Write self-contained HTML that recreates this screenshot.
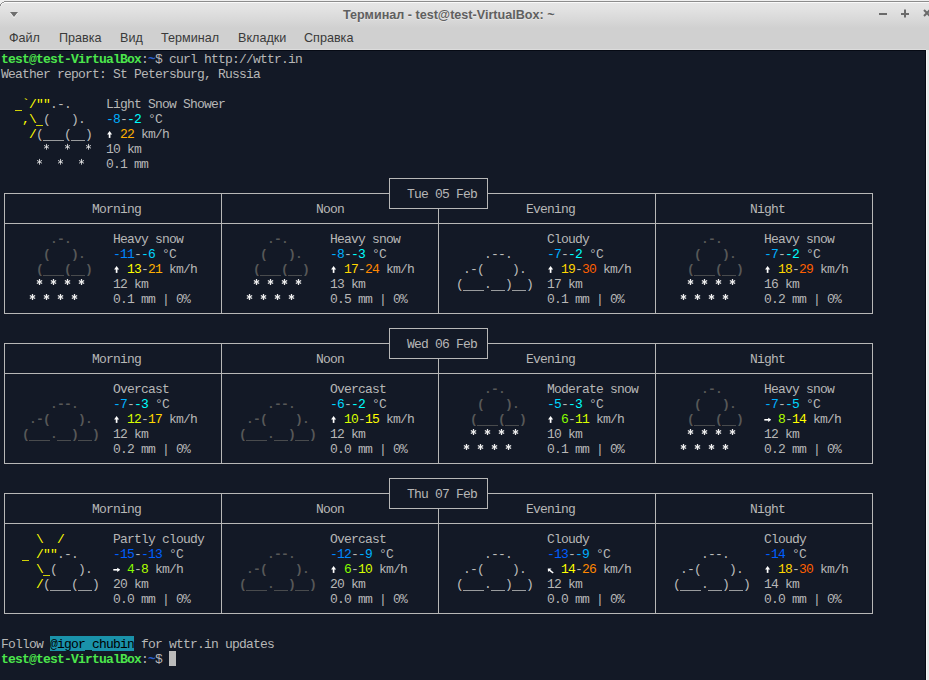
<!DOCTYPE html>
<html><head><meta charset="utf-8"><style>
html,body{margin:0;padding:0}
body{width:929px;height:680px;overflow:hidden;position:relative;background:#efefef;font-family:"Liberation Sans",sans-serif}
#win{position:absolute;left:0;top:0;width:929px;height:680px;overflow:hidden}
#title{position:absolute;left:0;top:1px;width:929px;height:27px;background:linear-gradient(#e6e6e6 0px,#e3e3e3 6px,#d8d8d8 18px,#d0d0d0 26px);border-top:1px solid #8c8c8c;box-shadow:inset 0 1px 0 #fafafa}
#ttl{position:absolute;left:343px;top:8px;width:211px;font-weight:bold;font-size:12.6px;color:#606060;white-space:nowrap;text-shadow:0 1px 0 rgba(255,255,255,.35)}
#menu{position:absolute;left:0;top:28px;width:929px;height:22px;background:#d0d0d0}
#mb{position:absolute;left:0;top:49px;width:926px;height:1px;background:#dcdcdc}
.m{position:absolute;top:3px;font-size:12.6px;color:#3a3a3a;white-space:nowrap}
#term{position:absolute;left:0;top:50px;width:926px;height:630px;background:#131926;border-top:1px solid #060a14;box-sizing:border-box;border-right:1px solid #060a14}
#rs{position:absolute;left:926px;top:50px;width:3px;height:630px;background:#e8e8e8;border-left:1px solid #f6f6f6;box-sizing:border-box}
.t{position:absolute;height:15px;line-height:15px;white-space:pre;font-family:"Liberation Mono",monospace;font-size:13px}
.t svg.g{position:absolute;top:-1px}
.t i{position:absolute;top:0;font-style:normal;width:7px;text-align:center}
b{position:absolute;background:#b7b7b7;display:block}
#cur{position:absolute;left:169px;top:651px;width:7px;height:15px;background:#bbbbbb}
</style></head><body><div id="win">
<div id="title"></div>
<svg style="position:absolute;left:0;top:0" width="6" height="7" shape-rendering="crispEdges">
<rect x="0" y="1" width="4" height="1" fill="#efefef"/><rect x="0" y="2" width="2" height="1" fill="#efefef"/><rect x="0" y="3" width="1" height="1" fill="#efefef"/>
<rect x="2" y="2" width="2" height="1" fill="#9a9a9a"/><rect x="1" y="3" width="1" height="1" fill="#8e8e8e"/><rect x="0" y="4" width="1" height="2" fill="#8e8e8e"/>
<rect x="2" y="3" width="2" height="1" fill="#f4f4f4"/><rect x="1" y="4" width="1" height="2" fill="#f0f0f0"/>
</svg>
<svg style="position:absolute;left:9px;top:11px" width="11" height="9"><path d="M1 2 L9 2 L5 7 Z" fill="#ffffff" opacity="0.9"/><path d="M1 1 L9 1 L5 6 Z" fill="#6e6e6e"/></svg>
<div id="ttl">Терминал - test@test-VirtualBox: ~</div>
<svg style="position:absolute;left:876px;top:7px" width="53" height="14">
<rect x="3" y="6" width="8" height="2" fill="#6a6a6a"/>
<rect x="25" y="6" width="8" height="2" fill="#6a6a6a"/><rect x="28" y="2.5" width="2" height="8" fill="#6a6a6a"/>
<path d="M48 3 L54 9 M54 3 L48 9" stroke="#6a6a6a" stroke-width="2"/>
</svg>
<div id="menu"><span class="m" style="left:9px">Файл</span><span class="m" style="left:59px">Правка</span><span class="m" style="left:120px">Вид</span><span class="m" style="left:161px">Терминал</span><span class="m" style="left:238px">Вкладки</span><span class="m" style="left:304px">Справка</span></div><div id="mb"></div>
<div id="term"></div>
<div id="rs"></div>
<b style="left:389px;top:178px;width:99px;height:1px"></b>
<b style="left:389px;top:208px;width:99px;height:1px"></b>
<b style="left:4px;top:193px;width:386px;height:1px"></b>
<b style="left:487px;top:193px;width:386px;height:1px"></b>
<b style="left:4px;top:223px;width:869px;height:1px"></b>
<b style="left:4px;top:313px;width:869px;height:1px"></b>
<b style="left:389px;top:328px;width:99px;height:1px"></b>
<b style="left:389px;top:358px;width:99px;height:1px"></b>
<b style="left:4px;top:343px;width:386px;height:1px"></b>
<b style="left:487px;top:343px;width:386px;height:1px"></b>
<b style="left:4px;top:373px;width:869px;height:1px"></b>
<b style="left:4px;top:463px;width:869px;height:1px"></b>
<b style="left:389px;top:478px;width:99px;height:1px"></b>
<b style="left:389px;top:508px;width:99px;height:1px"></b>
<b style="left:4px;top:493px;width:386px;height:1px"></b>
<b style="left:487px;top:493px;width:386px;height:1px"></b>
<b style="left:4px;top:523px;width:869px;height:1px"></b>
<b style="left:4px;top:613px;width:869px;height:1px"></b>
<b style="left:389px;top:178px;width:1px;height:31px"></b>
<b style="left:487px;top:178px;width:1px;height:31px"></b>
<b style="left:438px;top:208px;width:1px;height:106px"></b>
<b style="left:4px;top:193px;width:1px;height:121px"></b>
<b style="left:221px;top:193px;width:1px;height:121px"></b>
<b style="left:655px;top:193px;width:1px;height:121px"></b>
<b style="left:872px;top:193px;width:1px;height:121px"></b>
<b style="left:389px;top:328px;width:1px;height:31px"></b>
<b style="left:487px;top:328px;width:1px;height:31px"></b>
<b style="left:438px;top:358px;width:1px;height:106px"></b>
<b style="left:4px;top:343px;width:1px;height:121px"></b>
<b style="left:221px;top:343px;width:1px;height:121px"></b>
<b style="left:655px;top:343px;width:1px;height:121px"></b>
<b style="left:872px;top:343px;width:1px;height:121px"></b>
<b style="left:389px;top:478px;width:1px;height:31px"></b>
<b style="left:487px;top:478px;width:1px;height:31px"></b>
<b style="left:438px;top:508px;width:1px;height:106px"></b>
<b style="left:4px;top:493px;width:1px;height:121px"></b>
<b style="left:221px;top:493px;width:1px;height:121px"></b>
<b style="left:655px;top:493px;width:1px;height:121px"></b>
<b style="left:872px;top:493px;width:1px;height:121px"></b>
<div class="t" style="left:1px;top:52px;color:#4ce64c;font-weight:bold"><i style="left:0px">t</i><i style="left:7px">e</i><i style="left:14px">s</i><i style="left:21px">t</i><i style="left:28px">@</i><i style="left:35px">t</i><i style="left:42px">e</i><i style="left:49px">s</i><i style="left:56px">t</i><i style="left:63px">-</i><i style="left:70px">V</i><i style="left:77px">i</i><i style="left:84px">r</i><i style="left:91px">t</i><i style="left:98px">u</i><i style="left:105px">a</i><i style="left:112px">l</i><i style="left:119px">B</i><i style="left:126px">o</i><i style="left:133px">x</i></div>
<div class="t" style="left:141px;top:52px;color:#b7b7b7"><i style="left:0px">:</i></div>
<div class="t" style="left:148px;top:52px;color:#295fcc;font-weight:bold"><i style="left:0px">~</i></div>
<div class="t" style="left:155px;top:52px;color:#b7b7b7"><i style="left:0px">$</i></div>
<div class="t" style="left:169px;top:52px;color:#b7b7b7"><i style="left:0px">c</i><i style="left:7px">u</i><i style="left:14px">r</i><i style="left:21px">l</i><i style="left:35px">h</i><i style="left:42px">t</i><i style="left:49px">t</i><i style="left:56px">p</i><i style="left:63px">:</i><i style="left:70px">/</i><i style="left:77px">/</i><i style="left:84px">w</i><i style="left:91px">t</i><i style="left:98px">t</i><i style="left:105px">r</i><i style="left:112px">.</i><i style="left:119px">i</i><i style="left:126px">n</i></div>
<div class="t" style="left:1px;top:67px;color:#b7b7b7"><i style="left:0px">W</i><i style="left:7px">e</i><i style="left:14px">a</i><i style="left:21px">t</i><i style="left:28px">h</i><i style="left:35px">e</i><i style="left:42px">r</i><i style="left:56px">r</i><i style="left:63px">e</i><i style="left:70px">p</i><i style="left:77px">o</i><i style="left:84px">r</i><i style="left:91px">t</i><i style="left:98px">:</i><i style="left:112px">S</i><i style="left:119px">t</i><i style="left:133px">P</i><i style="left:140px">e</i><i style="left:147px">t</i><i style="left:154px">e</i><i style="left:161px">r</i><i style="left:168px">s</i><i style="left:175px">b</i><i style="left:182px">u</i><i style="left:189px">r</i><i style="left:196px">g</i><i style="left:203px">,</i><i style="left:217px">R</i><i style="left:224px">u</i><i style="left:231px">s</i><i style="left:238px">s</i><i style="left:245px">i</i><i style="left:252px">a</i></div>
<div class="t" style="left:15px;top:97px;color:#ffff00"><svg class="g" style="left:0px" width="7" height="15"><rect x="0" y="14" width="7" height="1" fill="#ffff00" fill-opacity="0.8"/></svg><i style="left:7px">`</i><i style="left:14px">/</i><i style="left:21px">&quot;</i><i style="left:28px">&quot;</i></div>
<div class="t" style="left:50px;top:97px;color:#bcbcbc"><i style="left:0px">.</i><i style="left:7px">-</i><i style="left:14px">.</i></div>
<div class="t" style="left:22px;top:112px;color:#ffff00"><i style="left:0px">,</i><i style="left:7px">\</i><svg class="g" style="left:14px" width="7" height="15"><rect x="0" y="14" width="7" height="1" fill="#ffff00" fill-opacity="0.8"/></svg></div>
<div class="t" style="left:43px;top:112px;color:#bcbcbc"><i style="left:0px">(</i><i style="left:28px">)</i><i style="left:35px">.</i></div>
<div class="t" style="left:29px;top:127px;color:#ffff00"><i style="left:0px">/</i></div>
<div class="t" style="left:36px;top:127px;color:#bcbcbc"><i style="left:0px">(</i><svg class="g" style="left:7px" width="7" height="15"><rect x="0" y="14" width="7" height="1" fill="#bcbcbc" fill-opacity="0.8"/></svg><svg class="g" style="left:14px" width="7" height="15"><rect x="0" y="14" width="7" height="1" fill="#bcbcbc" fill-opacity="0.8"/></svg><svg class="g" style="left:21px" width="7" height="15"><rect x="0" y="14" width="7" height="1" fill="#bcbcbc" fill-opacity="0.8"/></svg><i style="left:28px">(</i><svg class="g" style="left:35px" width="7" height="15"><rect x="0" y="14" width="7" height="1" fill="#bcbcbc" fill-opacity="0.8"/></svg><svg class="g" style="left:42px" width="7" height="15"><rect x="0" y="14" width="7" height="1" fill="#bcbcbc" fill-opacity="0.8"/></svg><i style="left:49px">)</i></div>
<div class="t" style="left:43px;top:142px;color:#eeeeee"><svg class="g" style="left:0px" width="7" height="15"><path d="M3.50 2.90L3.50 8.70M0.99 4.35L6.01 7.25M6.01 4.35L0.99 7.25" stroke="#eeeeee" stroke-width="0.8" fill="none"/></svg><svg class="g" style="left:21px" width="7" height="15"><path d="M3.50 2.90L3.50 8.70M0.99 4.35L6.01 7.25M6.01 4.35L0.99 7.25" stroke="#eeeeee" stroke-width="0.8" fill="none"/></svg><svg class="g" style="left:42px" width="7" height="15"><path d="M3.50 2.90L3.50 8.70M0.99 4.35L6.01 7.25M6.01 4.35L0.99 7.25" stroke="#eeeeee" stroke-width="0.8" fill="none"/></svg></div>
<div class="t" style="left:36px;top:157px;color:#eeeeee"><svg class="g" style="left:0px" width="7" height="15"><path d="M3.50 2.90L3.50 8.70M0.99 4.35L6.01 7.25M6.01 4.35L0.99 7.25" stroke="#eeeeee" stroke-width="0.8" fill="none"/></svg><svg class="g" style="left:21px" width="7" height="15"><path d="M3.50 2.90L3.50 8.70M0.99 4.35L6.01 7.25M6.01 4.35L0.99 7.25" stroke="#eeeeee" stroke-width="0.8" fill="none"/></svg><svg class="g" style="left:42px" width="7" height="15"><path d="M3.50 2.90L3.50 8.70M0.99 4.35L6.01 7.25M6.01 4.35L0.99 7.25" stroke="#eeeeee" stroke-width="0.8" fill="none"/></svg></div>
<div class="t" style="left:106px;top:97px;color:#b7b7b7"><i style="left:0px">L</i><i style="left:7px">i</i><i style="left:14px">g</i><i style="left:21px">h</i><i style="left:28px">t</i><i style="left:42px">S</i><i style="left:49px">n</i><i style="left:56px">o</i><i style="left:63px">w</i><i style="left:77px">S</i><i style="left:84px">h</i><i style="left:91px">o</i><i style="left:98px">w</i><i style="left:105px">e</i><i style="left:112px">r</i></div>
<div class="t" style="left:106px;top:112px;color:#00afff"><i style="left:0px">-</i><i style="left:7px">8</i></div>
<div class="t" style="left:120px;top:112px;color:#b7b7b7"><i style="left:0px">-</i></div>
<div class="t" style="left:127px;top:112px;color:#00ffff"><i style="left:0px">-</i><i style="left:7px">2</i></div>
<div class="t" style="left:148px;top:112px;color:#b7b7b7"><i style="left:0px">°</i><i style="left:7px">C</i></div>
<div class="t" style="left:106px;top:127px;color:#ffffff;font-weight:bold"><svg class="g" style="left:0px" width="7" height="15"><path d="M3.6 7.6V11.9" stroke="#ffffff" stroke-width="1.7"/><path d="M1.1 8.4L3.6 4.9L6.1 8.4Z" fill="#ffffff"/></svg></div>
<div class="t" style="left:120px;top:127px;color:#ffaf00"><i style="left:0px">2</i><i style="left:7px">2</i></div>
<div class="t" style="left:141px;top:127px;color:#b7b7b7"><i style="left:0px">k</i><i style="left:7px">m</i><i style="left:14px">/</i><i style="left:21px">h</i></div>
<div class="t" style="left:106px;top:142px;color:#b7b7b7"><i style="left:0px">1</i><i style="left:7px">0</i><i style="left:21px">k</i><i style="left:28px">m</i></div>
<div class="t" style="left:106px;top:157px;color:#b7b7b7"><i style="left:0px">0</i><i style="left:7px">.</i><i style="left:14px">1</i><i style="left:28px">m</i><i style="left:35px">m</i></div>
<div class="t" style="left:407px;top:187px;color:#b7b7b7"><i style="left:0px">T</i><i style="left:7px">u</i><i style="left:14px">e</i><i style="left:28px">0</i><i style="left:35px">5</i><i style="left:49px">F</i><i style="left:56px">e</i><i style="left:63px">b</i></div>
<div class="t" style="left:92px;top:202px;color:#b7b7b7"><i style="left:0px">M</i><i style="left:7px">o</i><i style="left:14px">r</i><i style="left:21px">n</i><i style="left:28px">i</i><i style="left:35px">n</i><i style="left:42px">g</i></div>
<div class="t" style="left:316px;top:202px;color:#b7b7b7"><i style="left:0px">N</i><i style="left:7px">o</i><i style="left:14px">o</i><i style="left:21px">n</i></div>
<div class="t" style="left:526px;top:202px;color:#b7b7b7"><i style="left:0px">E</i><i style="left:7px">v</i><i style="left:14px">e</i><i style="left:21px">n</i><i style="left:28px">i</i><i style="left:35px">n</i><i style="left:42px">g</i></div>
<div class="t" style="left:750px;top:202px;color:#b7b7b7"><i style="left:0px">N</i><i style="left:7px">i</i><i style="left:14px">g</i><i style="left:21px">h</i><i style="left:28px">t</i></div>
<div class="t" style="left:50px;top:232px;color:#585858;font-weight:bold"><i style="left:0px">.</i><i style="left:7px">-</i><i style="left:14px">.</i></div>
<div class="t" style="left:43px;top:247px;color:#585858;font-weight:bold"><i style="left:0px">(</i><i style="left:28px">)</i><i style="left:35px">.</i></div>
<div class="t" style="left:36px;top:262px;color:#585858;font-weight:bold"><i style="left:0px">(</i><svg class="g" style="left:7px" width="7" height="15"><rect x="0" y="14" width="7" height="1" fill="#585858" fill-opacity="0.8"/></svg><svg class="g" style="left:14px" width="7" height="15"><rect x="0" y="14" width="7" height="1" fill="#585858" fill-opacity="0.8"/></svg><svg class="g" style="left:21px" width="7" height="15"><rect x="0" y="14" width="7" height="1" fill="#585858" fill-opacity="0.8"/></svg><i style="left:28px">(</i><svg class="g" style="left:35px" width="7" height="15"><rect x="0" y="14" width="7" height="1" fill="#585858" fill-opacity="0.8"/></svg><svg class="g" style="left:42px" width="7" height="15"><rect x="0" y="14" width="7" height="1" fill="#585858" fill-opacity="0.8"/></svg><i style="left:49px">)</i></div>
<div class="t" style="left:36px;top:277px;color:#eeeeee;font-weight:bold"><svg class="g" style="left:0px" width="7" height="15"><path d="M3.50 2.95L3.50 9.05M0.86 4.48L6.14 7.52M6.14 4.48L0.86 7.52" stroke="#eeeeee" stroke-width="1.25" fill="none"/></svg><svg class="g" style="left:14px" width="7" height="15"><path d="M3.50 2.95L3.50 9.05M0.86 4.48L6.14 7.52M6.14 4.48L0.86 7.52" stroke="#eeeeee" stroke-width="1.25" fill="none"/></svg><svg class="g" style="left:28px" width="7" height="15"><path d="M3.50 2.95L3.50 9.05M0.86 4.48L6.14 7.52M6.14 4.48L0.86 7.52" stroke="#eeeeee" stroke-width="1.25" fill="none"/></svg><svg class="g" style="left:42px" width="7" height="15"><path d="M3.50 2.95L3.50 9.05M0.86 4.48L6.14 7.52M6.14 4.48L0.86 7.52" stroke="#eeeeee" stroke-width="1.25" fill="none"/></svg></div>
<div class="t" style="left:29px;top:292px;color:#eeeeee;font-weight:bold"><svg class="g" style="left:0px" width="7" height="15"><path d="M3.50 2.95L3.50 9.05M0.86 4.48L6.14 7.52M6.14 4.48L0.86 7.52" stroke="#eeeeee" stroke-width="1.25" fill="none"/></svg><svg class="g" style="left:14px" width="7" height="15"><path d="M3.50 2.95L3.50 9.05M0.86 4.48L6.14 7.52M6.14 4.48L0.86 7.52" stroke="#eeeeee" stroke-width="1.25" fill="none"/></svg><svg class="g" style="left:28px" width="7" height="15"><path d="M3.50 2.95L3.50 9.05M0.86 4.48L6.14 7.52M6.14 4.48L0.86 7.52" stroke="#eeeeee" stroke-width="1.25" fill="none"/></svg><svg class="g" style="left:42px" width="7" height="15"><path d="M3.50 2.95L3.50 9.05M0.86 4.48L6.14 7.52M6.14 4.48L0.86 7.52" stroke="#eeeeee" stroke-width="1.25" fill="none"/></svg></div>
<div class="t" style="left:113px;top:232px;color:#b7b7b7"><i style="left:0px">H</i><i style="left:7px">e</i><i style="left:14px">a</i><i style="left:21px">v</i><i style="left:28px">y</i><i style="left:42px">s</i><i style="left:49px">n</i><i style="left:56px">o</i><i style="left:63px">w</i></div>
<div class="t" style="left:113px;top:247px;color:#0087ff"><i style="left:0px">-</i><i style="left:7px">1</i><i style="left:14px">1</i></div>
<div class="t" style="left:134px;top:247px;color:#b7b7b7"><i style="left:0px">-</i></div>
<div class="t" style="left:141px;top:247px;color:#00d7ff"><i style="left:0px">-</i><i style="left:7px">6</i></div>
<div class="t" style="left:162px;top:247px;color:#b7b7b7"><i style="left:0px">°</i><i style="left:7px">C</i></div>
<div class="t" style="left:113px;top:262px;color:#ffffff;font-weight:bold"><svg class="g" style="left:0px" width="7" height="15"><path d="M3.6 7.6V11.9" stroke="#ffffff" stroke-width="1.7"/><path d="M1.1 8.4L3.6 4.9L6.1 8.4Z" fill="#ffffff"/></svg></div>
<div class="t" style="left:127px;top:262px;color:#ffff00"><i style="left:0px">1</i><i style="left:7px">3</i></div>
<div class="t" style="left:141px;top:262px;color:#b7b7b7"><i style="left:0px">-</i></div>
<div class="t" style="left:148px;top:262px;color:#ffaf00"><i style="left:0px">2</i><i style="left:7px">1</i></div>
<div class="t" style="left:169px;top:262px;color:#b7b7b7"><i style="left:0px">k</i><i style="left:7px">m</i><i style="left:14px">/</i><i style="left:21px">h</i></div>
<div class="t" style="left:113px;top:277px;color:#b7b7b7"><i style="left:0px">1</i><i style="left:7px">2</i><i style="left:21px">k</i><i style="left:28px">m</i></div>
<div class="t" style="left:113px;top:292px;color:#b7b7b7"><i style="left:0px">0</i><i style="left:7px">.</i><i style="left:14px">1</i><i style="left:28px">m</i><i style="left:35px">m</i><i style="left:49px">|</i><i style="left:63px">0</i><i style="left:70px">%</i></div>
<div class="t" style="left:267px;top:232px;color:#585858;font-weight:bold"><i style="left:0px">.</i><i style="left:7px">-</i><i style="left:14px">.</i></div>
<div class="t" style="left:260px;top:247px;color:#585858;font-weight:bold"><i style="left:0px">(</i><i style="left:28px">)</i><i style="left:35px">.</i></div>
<div class="t" style="left:253px;top:262px;color:#585858;font-weight:bold"><i style="left:0px">(</i><svg class="g" style="left:7px" width="7" height="15"><rect x="0" y="14" width="7" height="1" fill="#585858" fill-opacity="0.8"/></svg><svg class="g" style="left:14px" width="7" height="15"><rect x="0" y="14" width="7" height="1" fill="#585858" fill-opacity="0.8"/></svg><svg class="g" style="left:21px" width="7" height="15"><rect x="0" y="14" width="7" height="1" fill="#585858" fill-opacity="0.8"/></svg><i style="left:28px">(</i><svg class="g" style="left:35px" width="7" height="15"><rect x="0" y="14" width="7" height="1" fill="#585858" fill-opacity="0.8"/></svg><svg class="g" style="left:42px" width="7" height="15"><rect x="0" y="14" width="7" height="1" fill="#585858" fill-opacity="0.8"/></svg><i style="left:49px">)</i></div>
<div class="t" style="left:253px;top:277px;color:#eeeeee;font-weight:bold"><svg class="g" style="left:0px" width="7" height="15"><path d="M3.50 2.95L3.50 9.05M0.86 4.48L6.14 7.52M6.14 4.48L0.86 7.52" stroke="#eeeeee" stroke-width="1.25" fill="none"/></svg><svg class="g" style="left:14px" width="7" height="15"><path d="M3.50 2.95L3.50 9.05M0.86 4.48L6.14 7.52M6.14 4.48L0.86 7.52" stroke="#eeeeee" stroke-width="1.25" fill="none"/></svg><svg class="g" style="left:28px" width="7" height="15"><path d="M3.50 2.95L3.50 9.05M0.86 4.48L6.14 7.52M6.14 4.48L0.86 7.52" stroke="#eeeeee" stroke-width="1.25" fill="none"/></svg><svg class="g" style="left:42px" width="7" height="15"><path d="M3.50 2.95L3.50 9.05M0.86 4.48L6.14 7.52M6.14 4.48L0.86 7.52" stroke="#eeeeee" stroke-width="1.25" fill="none"/></svg></div>
<div class="t" style="left:246px;top:292px;color:#eeeeee;font-weight:bold"><svg class="g" style="left:0px" width="7" height="15"><path d="M3.50 2.95L3.50 9.05M0.86 4.48L6.14 7.52M6.14 4.48L0.86 7.52" stroke="#eeeeee" stroke-width="1.25" fill="none"/></svg><svg class="g" style="left:14px" width="7" height="15"><path d="M3.50 2.95L3.50 9.05M0.86 4.48L6.14 7.52M6.14 4.48L0.86 7.52" stroke="#eeeeee" stroke-width="1.25" fill="none"/></svg><svg class="g" style="left:28px" width="7" height="15"><path d="M3.50 2.95L3.50 9.05M0.86 4.48L6.14 7.52M6.14 4.48L0.86 7.52" stroke="#eeeeee" stroke-width="1.25" fill="none"/></svg><svg class="g" style="left:42px" width="7" height="15"><path d="M3.50 2.95L3.50 9.05M0.86 4.48L6.14 7.52M6.14 4.48L0.86 7.52" stroke="#eeeeee" stroke-width="1.25" fill="none"/></svg></div>
<div class="t" style="left:330px;top:232px;color:#b7b7b7"><i style="left:0px">H</i><i style="left:7px">e</i><i style="left:14px">a</i><i style="left:21px">v</i><i style="left:28px">y</i><i style="left:42px">s</i><i style="left:49px">n</i><i style="left:56px">o</i><i style="left:63px">w</i></div>
<div class="t" style="left:330px;top:247px;color:#00afff"><i style="left:0px">-</i><i style="left:7px">8</i></div>
<div class="t" style="left:344px;top:247px;color:#b7b7b7"><i style="left:0px">-</i></div>
<div class="t" style="left:351px;top:247px;color:#00ffff"><i style="left:0px">-</i><i style="left:7px">3</i></div>
<div class="t" style="left:372px;top:247px;color:#b7b7b7"><i style="left:0px">°</i><i style="left:7px">C</i></div>
<div class="t" style="left:330px;top:262px;color:#ffffff;font-weight:bold"><svg class="g" style="left:0px" width="7" height="15"><path d="M3.6 7.6V11.9" stroke="#ffffff" stroke-width="1.7"/><path d="M1.1 8.4L3.6 4.9L6.1 8.4Z" fill="#ffffff"/></svg></div>
<div class="t" style="left:344px;top:262px;color:#ffd700"><i style="left:0px">1</i><i style="left:7px">7</i></div>
<div class="t" style="left:358px;top:262px;color:#b7b7b7"><i style="left:0px">-</i></div>
<div class="t" style="left:365px;top:262px;color:#ff8700"><i style="left:0px">2</i><i style="left:7px">4</i></div>
<div class="t" style="left:386px;top:262px;color:#b7b7b7"><i style="left:0px">k</i><i style="left:7px">m</i><i style="left:14px">/</i><i style="left:21px">h</i></div>
<div class="t" style="left:330px;top:277px;color:#b7b7b7"><i style="left:0px">1</i><i style="left:7px">3</i><i style="left:21px">k</i><i style="left:28px">m</i></div>
<div class="t" style="left:330px;top:292px;color:#b7b7b7"><i style="left:0px">0</i><i style="left:7px">.</i><i style="left:14px">5</i><i style="left:28px">m</i><i style="left:35px">m</i><i style="left:49px">|</i><i style="left:63px">0</i><i style="left:70px">%</i></div>
<div class="t" style="left:484px;top:247px;color:#bcbcbc"><i style="left:0px">.</i><i style="left:7px">-</i><i style="left:14px">-</i><i style="left:21px">.</i></div>
<div class="t" style="left:463px;top:262px;color:#bcbcbc"><i style="left:0px">.</i><i style="left:7px">-</i><i style="left:14px">(</i><i style="left:49px">)</i><i style="left:56px">.</i></div>
<div class="t" style="left:456px;top:277px;color:#bcbcbc"><i style="left:0px">(</i><svg class="g" style="left:7px" width="7" height="15"><rect x="0" y="14" width="7" height="1" fill="#bcbcbc" fill-opacity="0.8"/></svg><svg class="g" style="left:14px" width="7" height="15"><rect x="0" y="14" width="7" height="1" fill="#bcbcbc" fill-opacity="0.8"/></svg><svg class="g" style="left:21px" width="7" height="15"><rect x="0" y="14" width="7" height="1" fill="#bcbcbc" fill-opacity="0.8"/></svg><i style="left:28px">.</i><svg class="g" style="left:35px" width="7" height="15"><rect x="0" y="14" width="7" height="1" fill="#bcbcbc" fill-opacity="0.8"/></svg><svg class="g" style="left:42px" width="7" height="15"><rect x="0" y="14" width="7" height="1" fill="#bcbcbc" fill-opacity="0.8"/></svg><i style="left:49px">)</i><svg class="g" style="left:56px" width="7" height="15"><rect x="0" y="14" width="7" height="1" fill="#bcbcbc" fill-opacity="0.8"/></svg><svg class="g" style="left:63px" width="7" height="15"><rect x="0" y="14" width="7" height="1" fill="#bcbcbc" fill-opacity="0.8"/></svg><i style="left:70px">)</i></div>
<div class="t" style="left:547px;top:232px;color:#b7b7b7"><i style="left:0px">C</i><i style="left:7px">l</i><i style="left:14px">o</i><i style="left:21px">u</i><i style="left:28px">d</i><i style="left:35px">y</i></div>
<div class="t" style="left:547px;top:247px;color:#00afff"><i style="left:0px">-</i><i style="left:7px">7</i></div>
<div class="t" style="left:561px;top:247px;color:#b7b7b7"><i style="left:0px">-</i></div>
<div class="t" style="left:568px;top:247px;color:#00ffff"><i style="left:0px">-</i><i style="left:7px">2</i></div>
<div class="t" style="left:589px;top:247px;color:#b7b7b7"><i style="left:0px">°</i><i style="left:7px">C</i></div>
<div class="t" style="left:547px;top:262px;color:#ffffff;font-weight:bold"><svg class="g" style="left:0px" width="7" height="15"><path d="M3.6 7.6V11.9" stroke="#ffffff" stroke-width="1.7"/><path d="M1.1 8.4L3.6 4.9L6.1 8.4Z" fill="#ffffff"/></svg></div>
<div class="t" style="left:561px;top:262px;color:#ffd700"><i style="left:0px">1</i><i style="left:7px">9</i></div>
<div class="t" style="left:575px;top:262px;color:#b7b7b7"><i style="left:0px">-</i></div>
<div class="t" style="left:582px;top:262px;color:#ff5f00"><i style="left:0px">3</i><i style="left:7px">0</i></div>
<div class="t" style="left:603px;top:262px;color:#b7b7b7"><i style="left:0px">k</i><i style="left:7px">m</i><i style="left:14px">/</i><i style="left:21px">h</i></div>
<div class="t" style="left:547px;top:277px;color:#b7b7b7"><i style="left:0px">1</i><i style="left:7px">7</i><i style="left:21px">k</i><i style="left:28px">m</i></div>
<div class="t" style="left:547px;top:292px;color:#b7b7b7"><i style="left:0px">0</i><i style="left:7px">.</i><i style="left:14px">1</i><i style="left:28px">m</i><i style="left:35px">m</i><i style="left:49px">|</i><i style="left:63px">0</i><i style="left:70px">%</i></div>
<div class="t" style="left:701px;top:232px;color:#585858;font-weight:bold"><i style="left:0px">.</i><i style="left:7px">-</i><i style="left:14px">.</i></div>
<div class="t" style="left:694px;top:247px;color:#585858;font-weight:bold"><i style="left:0px">(</i><i style="left:28px">)</i><i style="left:35px">.</i></div>
<div class="t" style="left:687px;top:262px;color:#585858;font-weight:bold"><i style="left:0px">(</i><svg class="g" style="left:7px" width="7" height="15"><rect x="0" y="14" width="7" height="1" fill="#585858" fill-opacity="0.8"/></svg><svg class="g" style="left:14px" width="7" height="15"><rect x="0" y="14" width="7" height="1" fill="#585858" fill-opacity="0.8"/></svg><svg class="g" style="left:21px" width="7" height="15"><rect x="0" y="14" width="7" height="1" fill="#585858" fill-opacity="0.8"/></svg><i style="left:28px">(</i><svg class="g" style="left:35px" width="7" height="15"><rect x="0" y="14" width="7" height="1" fill="#585858" fill-opacity="0.8"/></svg><svg class="g" style="left:42px" width="7" height="15"><rect x="0" y="14" width="7" height="1" fill="#585858" fill-opacity="0.8"/></svg><i style="left:49px">)</i></div>
<div class="t" style="left:687px;top:277px;color:#eeeeee;font-weight:bold"><svg class="g" style="left:0px" width="7" height="15"><path d="M3.50 2.95L3.50 9.05M0.86 4.48L6.14 7.52M6.14 4.48L0.86 7.52" stroke="#eeeeee" stroke-width="1.25" fill="none"/></svg><svg class="g" style="left:14px" width="7" height="15"><path d="M3.50 2.95L3.50 9.05M0.86 4.48L6.14 7.52M6.14 4.48L0.86 7.52" stroke="#eeeeee" stroke-width="1.25" fill="none"/></svg><svg class="g" style="left:28px" width="7" height="15"><path d="M3.50 2.95L3.50 9.05M0.86 4.48L6.14 7.52M6.14 4.48L0.86 7.52" stroke="#eeeeee" stroke-width="1.25" fill="none"/></svg><svg class="g" style="left:42px" width="7" height="15"><path d="M3.50 2.95L3.50 9.05M0.86 4.48L6.14 7.52M6.14 4.48L0.86 7.52" stroke="#eeeeee" stroke-width="1.25" fill="none"/></svg></div>
<div class="t" style="left:680px;top:292px;color:#eeeeee;font-weight:bold"><svg class="g" style="left:0px" width="7" height="15"><path d="M3.50 2.95L3.50 9.05M0.86 4.48L6.14 7.52M6.14 4.48L0.86 7.52" stroke="#eeeeee" stroke-width="1.25" fill="none"/></svg><svg class="g" style="left:14px" width="7" height="15"><path d="M3.50 2.95L3.50 9.05M0.86 4.48L6.14 7.52M6.14 4.48L0.86 7.52" stroke="#eeeeee" stroke-width="1.25" fill="none"/></svg><svg class="g" style="left:28px" width="7" height="15"><path d="M3.50 2.95L3.50 9.05M0.86 4.48L6.14 7.52M6.14 4.48L0.86 7.52" stroke="#eeeeee" stroke-width="1.25" fill="none"/></svg><svg class="g" style="left:42px" width="7" height="15"><path d="M3.50 2.95L3.50 9.05M0.86 4.48L6.14 7.52M6.14 4.48L0.86 7.52" stroke="#eeeeee" stroke-width="1.25" fill="none"/></svg></div>
<div class="t" style="left:764px;top:232px;color:#b7b7b7"><i style="left:0px">H</i><i style="left:7px">e</i><i style="left:14px">a</i><i style="left:21px">v</i><i style="left:28px">y</i><i style="left:42px">s</i><i style="left:49px">n</i><i style="left:56px">o</i><i style="left:63px">w</i></div>
<div class="t" style="left:764px;top:247px;color:#00afff"><i style="left:0px">-</i><i style="left:7px">7</i></div>
<div class="t" style="left:778px;top:247px;color:#b7b7b7"><i style="left:0px">-</i></div>
<div class="t" style="left:785px;top:247px;color:#00ffff"><i style="left:0px">-</i><i style="left:7px">2</i></div>
<div class="t" style="left:806px;top:247px;color:#b7b7b7"><i style="left:0px">°</i><i style="left:7px">C</i></div>
<div class="t" style="left:764px;top:262px;color:#ffffff;font-weight:bold"><svg class="g" style="left:0px" width="7" height="15"><path d="M3.6 7.6V11.9" stroke="#ffffff" stroke-width="1.7"/><path d="M1.1 8.4L3.6 4.9L6.1 8.4Z" fill="#ffffff"/></svg></div>
<div class="t" style="left:778px;top:262px;color:#ffd700"><i style="left:0px">1</i><i style="left:7px">8</i></div>
<div class="t" style="left:792px;top:262px;color:#b7b7b7"><i style="left:0px">-</i></div>
<div class="t" style="left:799px;top:262px;color:#ff5f00"><i style="left:0px">2</i><i style="left:7px">9</i></div>
<div class="t" style="left:820px;top:262px;color:#b7b7b7"><i style="left:0px">k</i><i style="left:7px">m</i><i style="left:14px">/</i><i style="left:21px">h</i></div>
<div class="t" style="left:764px;top:277px;color:#b7b7b7"><i style="left:0px">1</i><i style="left:7px">6</i><i style="left:21px">k</i><i style="left:28px">m</i></div>
<div class="t" style="left:764px;top:292px;color:#b7b7b7"><i style="left:0px">0</i><i style="left:7px">.</i><i style="left:14px">2</i><i style="left:28px">m</i><i style="left:35px">m</i><i style="left:49px">|</i><i style="left:63px">0</i><i style="left:70px">%</i></div>
<div class="t" style="left:407px;top:337px;color:#b7b7b7"><i style="left:0px">W</i><i style="left:7px">e</i><i style="left:14px">d</i><i style="left:28px">0</i><i style="left:35px">6</i><i style="left:49px">F</i><i style="left:56px">e</i><i style="left:63px">b</i></div>
<div class="t" style="left:92px;top:352px;color:#b7b7b7"><i style="left:0px">M</i><i style="left:7px">o</i><i style="left:14px">r</i><i style="left:21px">n</i><i style="left:28px">i</i><i style="left:35px">n</i><i style="left:42px">g</i></div>
<div class="t" style="left:316px;top:352px;color:#b7b7b7"><i style="left:0px">N</i><i style="left:7px">o</i><i style="left:14px">o</i><i style="left:21px">n</i></div>
<div class="t" style="left:526px;top:352px;color:#b7b7b7"><i style="left:0px">E</i><i style="left:7px">v</i><i style="left:14px">e</i><i style="left:21px">n</i><i style="left:28px">i</i><i style="left:35px">n</i><i style="left:42px">g</i></div>
<div class="t" style="left:750px;top:352px;color:#b7b7b7"><i style="left:0px">N</i><i style="left:7px">i</i><i style="left:14px">g</i><i style="left:21px">h</i><i style="left:28px">t</i></div>
<div class="t" style="left:50px;top:397px;color:#585858;font-weight:bold"><i style="left:0px">.</i><i style="left:7px">-</i><i style="left:14px">-</i><i style="left:21px">.</i></div>
<div class="t" style="left:29px;top:412px;color:#585858;font-weight:bold"><i style="left:0px">.</i><i style="left:7px">-</i><i style="left:14px">(</i><i style="left:49px">)</i><i style="left:56px">.</i></div>
<div class="t" style="left:22px;top:427px;color:#585858;font-weight:bold"><i style="left:0px">(</i><svg class="g" style="left:7px" width="7" height="15"><rect x="0" y="14" width="7" height="1" fill="#585858" fill-opacity="0.8"/></svg><svg class="g" style="left:14px" width="7" height="15"><rect x="0" y="14" width="7" height="1" fill="#585858" fill-opacity="0.8"/></svg><svg class="g" style="left:21px" width="7" height="15"><rect x="0" y="14" width="7" height="1" fill="#585858" fill-opacity="0.8"/></svg><i style="left:28px">.</i><svg class="g" style="left:35px" width="7" height="15"><rect x="0" y="14" width="7" height="1" fill="#585858" fill-opacity="0.8"/></svg><svg class="g" style="left:42px" width="7" height="15"><rect x="0" y="14" width="7" height="1" fill="#585858" fill-opacity="0.8"/></svg><i style="left:49px">)</i><svg class="g" style="left:56px" width="7" height="15"><rect x="0" y="14" width="7" height="1" fill="#585858" fill-opacity="0.8"/></svg><svg class="g" style="left:63px" width="7" height="15"><rect x="0" y="14" width="7" height="1" fill="#585858" fill-opacity="0.8"/></svg><i style="left:70px">)</i></div>
<div class="t" style="left:113px;top:382px;color:#b7b7b7"><i style="left:0px">O</i><i style="left:7px">v</i><i style="left:14px">e</i><i style="left:21px">r</i><i style="left:28px">c</i><i style="left:35px">a</i><i style="left:42px">s</i><i style="left:49px">t</i></div>
<div class="t" style="left:113px;top:397px;color:#00afff"><i style="left:0px">-</i><i style="left:7px">7</i></div>
<div class="t" style="left:127px;top:397px;color:#b7b7b7"><i style="left:0px">-</i></div>
<div class="t" style="left:134px;top:397px;color:#00ffff"><i style="left:0px">-</i><i style="left:7px">3</i></div>
<div class="t" style="left:155px;top:397px;color:#b7b7b7"><i style="left:0px">°</i><i style="left:7px">C</i></div>
<div class="t" style="left:113px;top:412px;color:#ffffff;font-weight:bold"><svg class="g" style="left:0px" width="7" height="15"><path d="M3.6 7.6V11.9" stroke="#ffffff" stroke-width="1.7"/><path d="M1.1 8.4L3.6 4.9L6.1 8.4Z" fill="#ffffff"/></svg></div>
<div class="t" style="left:127px;top:412px;color:#d7ff00"><i style="left:0px">1</i><i style="left:7px">2</i></div>
<div class="t" style="left:141px;top:412px;color:#b7b7b7"><i style="left:0px">-</i></div>
<div class="t" style="left:148px;top:412px;color:#ffd700"><i style="left:0px">1</i><i style="left:7px">7</i></div>
<div class="t" style="left:169px;top:412px;color:#b7b7b7"><i style="left:0px">k</i><i style="left:7px">m</i><i style="left:14px">/</i><i style="left:21px">h</i></div>
<div class="t" style="left:113px;top:427px;color:#b7b7b7"><i style="left:0px">1</i><i style="left:7px">2</i><i style="left:21px">k</i><i style="left:28px">m</i></div>
<div class="t" style="left:113px;top:442px;color:#b7b7b7"><i style="left:0px">0</i><i style="left:7px">.</i><i style="left:14px">2</i><i style="left:28px">m</i><i style="left:35px">m</i><i style="left:49px">|</i><i style="left:63px">0</i><i style="left:70px">%</i></div>
<div class="t" style="left:267px;top:397px;color:#585858;font-weight:bold"><i style="left:0px">.</i><i style="left:7px">-</i><i style="left:14px">-</i><i style="left:21px">.</i></div>
<div class="t" style="left:246px;top:412px;color:#585858;font-weight:bold"><i style="left:0px">.</i><i style="left:7px">-</i><i style="left:14px">(</i><i style="left:49px">)</i><i style="left:56px">.</i></div>
<div class="t" style="left:239px;top:427px;color:#585858;font-weight:bold"><i style="left:0px">(</i><svg class="g" style="left:7px" width="7" height="15"><rect x="0" y="14" width="7" height="1" fill="#585858" fill-opacity="0.8"/></svg><svg class="g" style="left:14px" width="7" height="15"><rect x="0" y="14" width="7" height="1" fill="#585858" fill-opacity="0.8"/></svg><svg class="g" style="left:21px" width="7" height="15"><rect x="0" y="14" width="7" height="1" fill="#585858" fill-opacity="0.8"/></svg><i style="left:28px">.</i><svg class="g" style="left:35px" width="7" height="15"><rect x="0" y="14" width="7" height="1" fill="#585858" fill-opacity="0.8"/></svg><svg class="g" style="left:42px" width="7" height="15"><rect x="0" y="14" width="7" height="1" fill="#585858" fill-opacity="0.8"/></svg><i style="left:49px">)</i><svg class="g" style="left:56px" width="7" height="15"><rect x="0" y="14" width="7" height="1" fill="#585858" fill-opacity="0.8"/></svg><svg class="g" style="left:63px" width="7" height="15"><rect x="0" y="14" width="7" height="1" fill="#585858" fill-opacity="0.8"/></svg><i style="left:70px">)</i></div>
<div class="t" style="left:330px;top:382px;color:#b7b7b7"><i style="left:0px">O</i><i style="left:7px">v</i><i style="left:14px">e</i><i style="left:21px">r</i><i style="left:28px">c</i><i style="left:35px">a</i><i style="left:42px">s</i><i style="left:49px">t</i></div>
<div class="t" style="left:330px;top:397px;color:#00d7ff"><i style="left:0px">-</i><i style="left:7px">6</i></div>
<div class="t" style="left:344px;top:397px;color:#b7b7b7"><i style="left:0px">-</i></div>
<div class="t" style="left:351px;top:397px;color:#00ffff"><i style="left:0px">-</i><i style="left:7px">2</i></div>
<div class="t" style="left:372px;top:397px;color:#b7b7b7"><i style="left:0px">°</i><i style="left:7px">C</i></div>
<div class="t" style="left:330px;top:412px;color:#ffffff;font-weight:bold"><svg class="g" style="left:0px" width="7" height="15"><path d="M3.6 7.6V11.9" stroke="#ffffff" stroke-width="1.7"/><path d="M1.1 8.4L3.6 4.9L6.1 8.4Z" fill="#ffffff"/></svg></div>
<div class="t" style="left:344px;top:412px;color:#d7ff00"><i style="left:0px">1</i><i style="left:7px">0</i></div>
<div class="t" style="left:358px;top:412px;color:#b7b7b7"><i style="left:0px">-</i></div>
<div class="t" style="left:365px;top:412px;color:#ffff00"><i style="left:0px">1</i><i style="left:7px">5</i></div>
<div class="t" style="left:386px;top:412px;color:#b7b7b7"><i style="left:0px">k</i><i style="left:7px">m</i><i style="left:14px">/</i><i style="left:21px">h</i></div>
<div class="t" style="left:330px;top:427px;color:#b7b7b7"><i style="left:0px">1</i><i style="left:7px">2</i><i style="left:21px">k</i><i style="left:28px">m</i></div>
<div class="t" style="left:330px;top:442px;color:#b7b7b7"><i style="left:0px">0</i><i style="left:7px">.</i><i style="left:14px">0</i><i style="left:28px">m</i><i style="left:35px">m</i><i style="left:49px">|</i><i style="left:63px">0</i><i style="left:70px">%</i></div>
<div class="t" style="left:484px;top:382px;color:#585858;font-weight:bold"><i style="left:0px">.</i><i style="left:7px">-</i><i style="left:14px">.</i></div>
<div class="t" style="left:477px;top:397px;color:#585858;font-weight:bold"><i style="left:0px">(</i><i style="left:28px">)</i><i style="left:35px">.</i></div>
<div class="t" style="left:470px;top:412px;color:#585858;font-weight:bold"><i style="left:0px">(</i><svg class="g" style="left:7px" width="7" height="15"><rect x="0" y="14" width="7" height="1" fill="#585858" fill-opacity="0.8"/></svg><svg class="g" style="left:14px" width="7" height="15"><rect x="0" y="14" width="7" height="1" fill="#585858" fill-opacity="0.8"/></svg><svg class="g" style="left:21px" width="7" height="15"><rect x="0" y="14" width="7" height="1" fill="#585858" fill-opacity="0.8"/></svg><i style="left:28px">(</i><svg class="g" style="left:35px" width="7" height="15"><rect x="0" y="14" width="7" height="1" fill="#585858" fill-opacity="0.8"/></svg><svg class="g" style="left:42px" width="7" height="15"><rect x="0" y="14" width="7" height="1" fill="#585858" fill-opacity="0.8"/></svg><i style="left:49px">)</i></div>
<div class="t" style="left:470px;top:427px;color:#eeeeee;font-weight:bold"><svg class="g" style="left:0px" width="7" height="15"><path d="M3.50 2.95L3.50 9.05M0.86 4.48L6.14 7.52M6.14 4.48L0.86 7.52" stroke="#eeeeee" stroke-width="1.25" fill="none"/></svg><svg class="g" style="left:14px" width="7" height="15"><path d="M3.50 2.95L3.50 9.05M0.86 4.48L6.14 7.52M6.14 4.48L0.86 7.52" stroke="#eeeeee" stroke-width="1.25" fill="none"/></svg><svg class="g" style="left:28px" width="7" height="15"><path d="M3.50 2.95L3.50 9.05M0.86 4.48L6.14 7.52M6.14 4.48L0.86 7.52" stroke="#eeeeee" stroke-width="1.25" fill="none"/></svg><svg class="g" style="left:42px" width="7" height="15"><path d="M3.50 2.95L3.50 9.05M0.86 4.48L6.14 7.52M6.14 4.48L0.86 7.52" stroke="#eeeeee" stroke-width="1.25" fill="none"/></svg></div>
<div class="t" style="left:463px;top:442px;color:#eeeeee;font-weight:bold"><svg class="g" style="left:0px" width="7" height="15"><path d="M3.50 2.95L3.50 9.05M0.86 4.48L6.14 7.52M6.14 4.48L0.86 7.52" stroke="#eeeeee" stroke-width="1.25" fill="none"/></svg><svg class="g" style="left:14px" width="7" height="15"><path d="M3.50 2.95L3.50 9.05M0.86 4.48L6.14 7.52M6.14 4.48L0.86 7.52" stroke="#eeeeee" stroke-width="1.25" fill="none"/></svg><svg class="g" style="left:28px" width="7" height="15"><path d="M3.50 2.95L3.50 9.05M0.86 4.48L6.14 7.52M6.14 4.48L0.86 7.52" stroke="#eeeeee" stroke-width="1.25" fill="none"/></svg><svg class="g" style="left:42px" width="7" height="15"><path d="M3.50 2.95L3.50 9.05M0.86 4.48L6.14 7.52M6.14 4.48L0.86 7.52" stroke="#eeeeee" stroke-width="1.25" fill="none"/></svg></div>
<div class="t" style="left:547px;top:382px;color:#b7b7b7"><i style="left:0px">M</i><i style="left:7px">o</i><i style="left:14px">d</i><i style="left:21px">e</i><i style="left:28px">r</i><i style="left:35px">a</i><i style="left:42px">t</i><i style="left:49px">e</i><i style="left:63px">s</i><i style="left:70px">n</i><i style="left:77px">o</i><i style="left:84px">w</i></div>
<div class="t" style="left:547px;top:397px;color:#00d7ff"><i style="left:0px">-</i><i style="left:7px">5</i></div>
<div class="t" style="left:561px;top:397px;color:#b7b7b7"><i style="left:0px">-</i></div>
<div class="t" style="left:568px;top:397px;color:#00ffff"><i style="left:0px">-</i><i style="left:7px">3</i></div>
<div class="t" style="left:589px;top:397px;color:#b7b7b7"><i style="left:0px">°</i><i style="left:7px">C</i></div>
<div class="t" style="left:547px;top:412px;color:#ffffff;font-weight:bold"><svg class="g" style="left:0px" width="7" height="15"><path d="M3.6 7.6V11.9" stroke="#ffffff" stroke-width="1.7"/><path d="M1.1 8.4L3.6 4.9L6.1 8.4Z" fill="#ffffff"/></svg></div>
<div class="t" style="left:561px;top:412px;color:#87ff00"><i style="left:0px">6</i></div>
<div class="t" style="left:568px;top:412px;color:#b7b7b7"><i style="left:0px">-</i></div>
<div class="t" style="left:575px;top:412px;color:#d7ff00"><i style="left:0px">1</i><i style="left:7px">1</i></div>
<div class="t" style="left:596px;top:412px;color:#b7b7b7"><i style="left:0px">k</i><i style="left:7px">m</i><i style="left:14px">/</i><i style="left:21px">h</i></div>
<div class="t" style="left:547px;top:427px;color:#b7b7b7"><i style="left:0px">1</i><i style="left:7px">0</i><i style="left:21px">k</i><i style="left:28px">m</i></div>
<div class="t" style="left:547px;top:442px;color:#b7b7b7"><i style="left:0px">0</i><i style="left:7px">.</i><i style="left:14px">1</i><i style="left:28px">m</i><i style="left:35px">m</i><i style="left:49px">|</i><i style="left:63px">0</i><i style="left:70px">%</i></div>
<div class="t" style="left:701px;top:382px;color:#585858;font-weight:bold"><i style="left:0px">.</i><i style="left:7px">-</i><i style="left:14px">.</i></div>
<div class="t" style="left:694px;top:397px;color:#585858;font-weight:bold"><i style="left:0px">(</i><i style="left:28px">)</i><i style="left:35px">.</i></div>
<div class="t" style="left:687px;top:412px;color:#585858;font-weight:bold"><i style="left:0px">(</i><svg class="g" style="left:7px" width="7" height="15"><rect x="0" y="14" width="7" height="1" fill="#585858" fill-opacity="0.8"/></svg><svg class="g" style="left:14px" width="7" height="15"><rect x="0" y="14" width="7" height="1" fill="#585858" fill-opacity="0.8"/></svg><svg class="g" style="left:21px" width="7" height="15"><rect x="0" y="14" width="7" height="1" fill="#585858" fill-opacity="0.8"/></svg><i style="left:28px">(</i><svg class="g" style="left:35px" width="7" height="15"><rect x="0" y="14" width="7" height="1" fill="#585858" fill-opacity="0.8"/></svg><svg class="g" style="left:42px" width="7" height="15"><rect x="0" y="14" width="7" height="1" fill="#585858" fill-opacity="0.8"/></svg><i style="left:49px">)</i></div>
<div class="t" style="left:687px;top:427px;color:#eeeeee;font-weight:bold"><svg class="g" style="left:0px" width="7" height="15"><path d="M3.50 2.95L3.50 9.05M0.86 4.48L6.14 7.52M6.14 4.48L0.86 7.52" stroke="#eeeeee" stroke-width="1.25" fill="none"/></svg><svg class="g" style="left:14px" width="7" height="15"><path d="M3.50 2.95L3.50 9.05M0.86 4.48L6.14 7.52M6.14 4.48L0.86 7.52" stroke="#eeeeee" stroke-width="1.25" fill="none"/></svg><svg class="g" style="left:28px" width="7" height="15"><path d="M3.50 2.95L3.50 9.05M0.86 4.48L6.14 7.52M6.14 4.48L0.86 7.52" stroke="#eeeeee" stroke-width="1.25" fill="none"/></svg><svg class="g" style="left:42px" width="7" height="15"><path d="M3.50 2.95L3.50 9.05M0.86 4.48L6.14 7.52M6.14 4.48L0.86 7.52" stroke="#eeeeee" stroke-width="1.25" fill="none"/></svg></div>
<div class="t" style="left:680px;top:442px;color:#eeeeee;font-weight:bold"><svg class="g" style="left:0px" width="7" height="15"><path d="M3.50 2.95L3.50 9.05M0.86 4.48L6.14 7.52M6.14 4.48L0.86 7.52" stroke="#eeeeee" stroke-width="1.25" fill="none"/></svg><svg class="g" style="left:14px" width="7" height="15"><path d="M3.50 2.95L3.50 9.05M0.86 4.48L6.14 7.52M6.14 4.48L0.86 7.52" stroke="#eeeeee" stroke-width="1.25" fill="none"/></svg><svg class="g" style="left:28px" width="7" height="15"><path d="M3.50 2.95L3.50 9.05M0.86 4.48L6.14 7.52M6.14 4.48L0.86 7.52" stroke="#eeeeee" stroke-width="1.25" fill="none"/></svg><svg class="g" style="left:42px" width="7" height="15"><path d="M3.50 2.95L3.50 9.05M0.86 4.48L6.14 7.52M6.14 4.48L0.86 7.52" stroke="#eeeeee" stroke-width="1.25" fill="none"/></svg></div>
<div class="t" style="left:764px;top:382px;color:#b7b7b7"><i style="left:0px">H</i><i style="left:7px">e</i><i style="left:14px">a</i><i style="left:21px">v</i><i style="left:28px">y</i><i style="left:42px">s</i><i style="left:49px">n</i><i style="left:56px">o</i><i style="left:63px">w</i></div>
<div class="t" style="left:764px;top:397px;color:#00afff"><i style="left:0px">-</i><i style="left:7px">7</i></div>
<div class="t" style="left:778px;top:397px;color:#b7b7b7"><i style="left:0px">-</i></div>
<div class="t" style="left:785px;top:397px;color:#00d7ff"><i style="left:0px">-</i><i style="left:7px">5</i></div>
<div class="t" style="left:806px;top:397px;color:#b7b7b7"><i style="left:0px">°</i><i style="left:7px">C</i></div>
<div class="t" style="left:764px;top:412px;color:#ffffff;font-weight:bold"><svg class="g" style="left:0px" width="7" height="15"><path d="M0.3 8.8H4.8" stroke="#ffffff" stroke-width="1.6"/><path d="M4.2 6.7L7.4 8.8L4.2 10.9Z" fill="#ffffff"/></svg></div>
<div class="t" style="left:778px;top:412px;color:#afff00"><i style="left:0px">8</i></div>
<div class="t" style="left:785px;top:412px;color:#b7b7b7"><i style="left:0px">-</i></div>
<div class="t" style="left:792px;top:412px;color:#ffff00"><i style="left:0px">1</i><i style="left:7px">4</i></div>
<div class="t" style="left:813px;top:412px;color:#b7b7b7"><i style="left:0px">k</i><i style="left:7px">m</i><i style="left:14px">/</i><i style="left:21px">h</i></div>
<div class="t" style="left:764px;top:427px;color:#b7b7b7"><i style="left:0px">1</i><i style="left:7px">2</i><i style="left:21px">k</i><i style="left:28px">m</i></div>
<div class="t" style="left:764px;top:442px;color:#b7b7b7"><i style="left:0px">0</i><i style="left:7px">.</i><i style="left:14px">2</i><i style="left:28px">m</i><i style="left:35px">m</i><i style="left:49px">|</i><i style="left:63px">0</i><i style="left:70px">%</i></div>
<div class="t" style="left:407px;top:487px;color:#b7b7b7"><i style="left:0px">T</i><i style="left:7px">h</i><i style="left:14px">u</i><i style="left:28px">0</i><i style="left:35px">7</i><i style="left:49px">F</i><i style="left:56px">e</i><i style="left:63px">b</i></div>
<div class="t" style="left:92px;top:502px;color:#b7b7b7"><i style="left:0px">M</i><i style="left:7px">o</i><i style="left:14px">r</i><i style="left:21px">n</i><i style="left:28px">i</i><i style="left:35px">n</i><i style="left:42px">g</i></div>
<div class="t" style="left:316px;top:502px;color:#b7b7b7"><i style="left:0px">N</i><i style="left:7px">o</i><i style="left:14px">o</i><i style="left:21px">n</i></div>
<div class="t" style="left:526px;top:502px;color:#b7b7b7"><i style="left:0px">E</i><i style="left:7px">v</i><i style="left:14px">e</i><i style="left:21px">n</i><i style="left:28px">i</i><i style="left:35px">n</i><i style="left:42px">g</i></div>
<div class="t" style="left:750px;top:502px;color:#b7b7b7"><i style="left:0px">N</i><i style="left:7px">i</i><i style="left:14px">g</i><i style="left:21px">h</i><i style="left:28px">t</i></div>
<div class="t" style="left:36px;top:532px;color:#ffff00"><i style="left:0px">\</i><i style="left:21px">/</i></div>
<div class="t" style="left:22px;top:547px;color:#ffff00"><svg class="g" style="left:0px" width="7" height="15"><rect x="0" y="14" width="7" height="1" fill="#ffff00" fill-opacity="0.8"/></svg><i style="left:14px">/</i><i style="left:21px">&quot;</i><i style="left:28px">&quot;</i></div>
<div class="t" style="left:57px;top:547px;color:#bcbcbc"><i style="left:0px">.</i><i style="left:7px">-</i><i style="left:14px">.</i></div>
<div class="t" style="left:36px;top:562px;color:#ffff00"><i style="left:0px">\</i><svg class="g" style="left:7px" width="7" height="15"><rect x="0" y="14" width="7" height="1" fill="#ffff00" fill-opacity="0.8"/></svg></div>
<div class="t" style="left:50px;top:562px;color:#bcbcbc"><i style="left:0px">(</i><i style="left:28px">)</i><i style="left:35px">.</i></div>
<div class="t" style="left:36px;top:577px;color:#ffff00"><i style="left:0px">/</i></div>
<div class="t" style="left:43px;top:577px;color:#bcbcbc"><i style="left:0px">(</i><svg class="g" style="left:7px" width="7" height="15"><rect x="0" y="14" width="7" height="1" fill="#bcbcbc" fill-opacity="0.8"/></svg><svg class="g" style="left:14px" width="7" height="15"><rect x="0" y="14" width="7" height="1" fill="#bcbcbc" fill-opacity="0.8"/></svg><svg class="g" style="left:21px" width="7" height="15"><rect x="0" y="14" width="7" height="1" fill="#bcbcbc" fill-opacity="0.8"/></svg><i style="left:28px">(</i><svg class="g" style="left:35px" width="7" height="15"><rect x="0" y="14" width="7" height="1" fill="#bcbcbc" fill-opacity="0.8"/></svg><svg class="g" style="left:42px" width="7" height="15"><rect x="0" y="14" width="7" height="1" fill="#bcbcbc" fill-opacity="0.8"/></svg><i style="left:49px">)</i></div>
<div class="t" style="left:113px;top:532px;color:#b7b7b7"><i style="left:0px">P</i><i style="left:7px">a</i><i style="left:14px">r</i><i style="left:21px">t</i><i style="left:28px">l</i><i style="left:35px">y</i><i style="left:49px">c</i><i style="left:56px">l</i><i style="left:63px">o</i><i style="left:70px">u</i><i style="left:77px">d</i><i style="left:84px">y</i></div>
<div class="t" style="left:113px;top:547px;color:#005fff"><i style="left:0px">-</i><i style="left:7px">1</i><i style="left:14px">5</i></div>
<div class="t" style="left:134px;top:547px;color:#b7b7b7"><i style="left:0px">-</i></div>
<div class="t" style="left:141px;top:547px;color:#005fff"><i style="left:0px">-</i><i style="left:7px">1</i><i style="left:14px">3</i></div>
<div class="t" style="left:169px;top:547px;color:#b7b7b7"><i style="left:0px">°</i><i style="left:7px">C</i></div>
<div class="t" style="left:113px;top:562px;color:#ffffff;font-weight:bold"><svg class="g" style="left:0px" width="7" height="15"><path d="M0.3 8.8H4.8" stroke="#ffffff" stroke-width="1.6"/><path d="M4.2 6.7L7.4 8.8L4.2 10.9Z" fill="#ffffff"/></svg></div>
<div class="t" style="left:127px;top:562px;color:#87ff00"><i style="left:0px">4</i></div>
<div class="t" style="left:134px;top:562px;color:#b7b7b7"><i style="left:0px">-</i></div>
<div class="t" style="left:141px;top:562px;color:#afff00"><i style="left:0px">8</i></div>
<div class="t" style="left:155px;top:562px;color:#b7b7b7"><i style="left:0px">k</i><i style="left:7px">m</i><i style="left:14px">/</i><i style="left:21px">h</i></div>
<div class="t" style="left:113px;top:577px;color:#b7b7b7"><i style="left:0px">2</i><i style="left:7px">0</i><i style="left:21px">k</i><i style="left:28px">m</i></div>
<div class="t" style="left:113px;top:592px;color:#b7b7b7"><i style="left:0px">0</i><i style="left:7px">.</i><i style="left:14px">0</i><i style="left:28px">m</i><i style="left:35px">m</i><i style="left:49px">|</i><i style="left:63px">0</i><i style="left:70px">%</i></div>
<div class="t" style="left:267px;top:547px;color:#585858;font-weight:bold"><i style="left:0px">.</i><i style="left:7px">-</i><i style="left:14px">-</i><i style="left:21px">.</i></div>
<div class="t" style="left:246px;top:562px;color:#585858;font-weight:bold"><i style="left:0px">.</i><i style="left:7px">-</i><i style="left:14px">(</i><i style="left:49px">)</i><i style="left:56px">.</i></div>
<div class="t" style="left:239px;top:577px;color:#585858;font-weight:bold"><i style="left:0px">(</i><svg class="g" style="left:7px" width="7" height="15"><rect x="0" y="14" width="7" height="1" fill="#585858" fill-opacity="0.8"/></svg><svg class="g" style="left:14px" width="7" height="15"><rect x="0" y="14" width="7" height="1" fill="#585858" fill-opacity="0.8"/></svg><svg class="g" style="left:21px" width="7" height="15"><rect x="0" y="14" width="7" height="1" fill="#585858" fill-opacity="0.8"/></svg><i style="left:28px">.</i><svg class="g" style="left:35px" width="7" height="15"><rect x="0" y="14" width="7" height="1" fill="#585858" fill-opacity="0.8"/></svg><svg class="g" style="left:42px" width="7" height="15"><rect x="0" y="14" width="7" height="1" fill="#585858" fill-opacity="0.8"/></svg><i style="left:49px">)</i><svg class="g" style="left:56px" width="7" height="15"><rect x="0" y="14" width="7" height="1" fill="#585858" fill-opacity="0.8"/></svg><svg class="g" style="left:63px" width="7" height="15"><rect x="0" y="14" width="7" height="1" fill="#585858" fill-opacity="0.8"/></svg><i style="left:70px">)</i></div>
<div class="t" style="left:330px;top:532px;color:#b7b7b7"><i style="left:0px">O</i><i style="left:7px">v</i><i style="left:14px">e</i><i style="left:21px">r</i><i style="left:28px">c</i><i style="left:35px">a</i><i style="left:42px">s</i><i style="left:49px">t</i></div>
<div class="t" style="left:330px;top:547px;color:#0087ff"><i style="left:0px">-</i><i style="left:7px">1</i><i style="left:14px">2</i></div>
<div class="t" style="left:351px;top:547px;color:#b7b7b7"><i style="left:0px">-</i></div>
<div class="t" style="left:358px;top:547px;color:#00afff"><i style="left:0px">-</i><i style="left:7px">9</i></div>
<div class="t" style="left:379px;top:547px;color:#b7b7b7"><i style="left:0px">°</i><i style="left:7px">C</i></div>
<div class="t" style="left:330px;top:562px;color:#ffffff;font-weight:bold"><svg class="g" style="left:0px" width="7" height="15"><path d="M3.6 7.6V11.9" stroke="#ffffff" stroke-width="1.7"/><path d="M1.1 8.4L3.6 4.9L6.1 8.4Z" fill="#ffffff"/></svg></div>
<div class="t" style="left:344px;top:562px;color:#87ff00"><i style="left:0px">6</i></div>
<div class="t" style="left:351px;top:562px;color:#b7b7b7"><i style="left:0px">-</i></div>
<div class="t" style="left:358px;top:562px;color:#d7ff00"><i style="left:0px">1</i><i style="left:7px">0</i></div>
<div class="t" style="left:379px;top:562px;color:#b7b7b7"><i style="left:0px">k</i><i style="left:7px">m</i><i style="left:14px">/</i><i style="left:21px">h</i></div>
<div class="t" style="left:330px;top:577px;color:#b7b7b7"><i style="left:0px">2</i><i style="left:7px">0</i><i style="left:21px">k</i><i style="left:28px">m</i></div>
<div class="t" style="left:330px;top:592px;color:#b7b7b7"><i style="left:0px">0</i><i style="left:7px">.</i><i style="left:14px">0</i><i style="left:28px">m</i><i style="left:35px">m</i><i style="left:49px">|</i><i style="left:63px">0</i><i style="left:70px">%</i></div>
<div class="t" style="left:484px;top:547px;color:#bcbcbc"><i style="left:0px">.</i><i style="left:7px">-</i><i style="left:14px">-</i><i style="left:21px">.</i></div>
<div class="t" style="left:463px;top:562px;color:#bcbcbc"><i style="left:0px">.</i><i style="left:7px">-</i><i style="left:14px">(</i><i style="left:49px">)</i><i style="left:56px">.</i></div>
<div class="t" style="left:456px;top:577px;color:#bcbcbc"><i style="left:0px">(</i><svg class="g" style="left:7px" width="7" height="15"><rect x="0" y="14" width="7" height="1" fill="#bcbcbc" fill-opacity="0.8"/></svg><svg class="g" style="left:14px" width="7" height="15"><rect x="0" y="14" width="7" height="1" fill="#bcbcbc" fill-opacity="0.8"/></svg><svg class="g" style="left:21px" width="7" height="15"><rect x="0" y="14" width="7" height="1" fill="#bcbcbc" fill-opacity="0.8"/></svg><i style="left:28px">.</i><svg class="g" style="left:35px" width="7" height="15"><rect x="0" y="14" width="7" height="1" fill="#bcbcbc" fill-opacity="0.8"/></svg><svg class="g" style="left:42px" width="7" height="15"><rect x="0" y="14" width="7" height="1" fill="#bcbcbc" fill-opacity="0.8"/></svg><i style="left:49px">)</i><svg class="g" style="left:56px" width="7" height="15"><rect x="0" y="14" width="7" height="1" fill="#bcbcbc" fill-opacity="0.8"/></svg><svg class="g" style="left:63px" width="7" height="15"><rect x="0" y="14" width="7" height="1" fill="#bcbcbc" fill-opacity="0.8"/></svg><i style="left:70px">)</i></div>
<div class="t" style="left:547px;top:532px;color:#b7b7b7"><i style="left:0px">C</i><i style="left:7px">l</i><i style="left:14px">o</i><i style="left:21px">u</i><i style="left:28px">d</i><i style="left:35px">y</i></div>
<div class="t" style="left:547px;top:547px;color:#005fff"><i style="left:0px">-</i><i style="left:7px">1</i><i style="left:14px">3</i></div>
<div class="t" style="left:568px;top:547px;color:#b7b7b7"><i style="left:0px">-</i></div>
<div class="t" style="left:575px;top:547px;color:#00afff"><i style="left:0px">-</i><i style="left:7px">9</i></div>
<div class="t" style="left:596px;top:547px;color:#b7b7b7"><i style="left:0px">°</i><i style="left:7px">C</i></div>
<div class="t" style="left:547px;top:562px;color:#ffffff;font-weight:bold"><svg class="g" style="left:0px" width="7" height="15"><path d="M2.2 8.8L6.2 12.0" stroke="#ffffff" stroke-width="1.6"/><path d="M0.8 7.4L4.5 7.6L1.0 11.0Z" fill="#ffffff"/></svg></div>
<div class="t" style="left:561px;top:562px;color:#ffff00"><i style="left:0px">1</i><i style="left:7px">4</i></div>
<div class="t" style="left:575px;top:562px;color:#b7b7b7"><i style="left:0px">-</i></div>
<div class="t" style="left:582px;top:562px;color:#ff8700"><i style="left:0px">2</i><i style="left:7px">6</i></div>
<div class="t" style="left:603px;top:562px;color:#b7b7b7"><i style="left:0px">k</i><i style="left:7px">m</i><i style="left:14px">/</i><i style="left:21px">h</i></div>
<div class="t" style="left:547px;top:577px;color:#b7b7b7"><i style="left:0px">1</i><i style="left:7px">2</i><i style="left:21px">k</i><i style="left:28px">m</i></div>
<div class="t" style="left:547px;top:592px;color:#b7b7b7"><i style="left:0px">0</i><i style="left:7px">.</i><i style="left:14px">0</i><i style="left:28px">m</i><i style="left:35px">m</i><i style="left:49px">|</i><i style="left:63px">0</i><i style="left:70px">%</i></div>
<div class="t" style="left:701px;top:547px;color:#bcbcbc"><i style="left:0px">.</i><i style="left:7px">-</i><i style="left:14px">-</i><i style="left:21px">.</i></div>
<div class="t" style="left:680px;top:562px;color:#bcbcbc"><i style="left:0px">.</i><i style="left:7px">-</i><i style="left:14px">(</i><i style="left:49px">)</i><i style="left:56px">.</i></div>
<div class="t" style="left:673px;top:577px;color:#bcbcbc"><i style="left:0px">(</i><svg class="g" style="left:7px" width="7" height="15"><rect x="0" y="14" width="7" height="1" fill="#bcbcbc" fill-opacity="0.8"/></svg><svg class="g" style="left:14px" width="7" height="15"><rect x="0" y="14" width="7" height="1" fill="#bcbcbc" fill-opacity="0.8"/></svg><svg class="g" style="left:21px" width="7" height="15"><rect x="0" y="14" width="7" height="1" fill="#bcbcbc" fill-opacity="0.8"/></svg><i style="left:28px">.</i><svg class="g" style="left:35px" width="7" height="15"><rect x="0" y="14" width="7" height="1" fill="#bcbcbc" fill-opacity="0.8"/></svg><svg class="g" style="left:42px" width="7" height="15"><rect x="0" y="14" width="7" height="1" fill="#bcbcbc" fill-opacity="0.8"/></svg><i style="left:49px">)</i><svg class="g" style="left:56px" width="7" height="15"><rect x="0" y="14" width="7" height="1" fill="#bcbcbc" fill-opacity="0.8"/></svg><svg class="g" style="left:63px" width="7" height="15"><rect x="0" y="14" width="7" height="1" fill="#bcbcbc" fill-opacity="0.8"/></svg><i style="left:70px">)</i></div>
<div class="t" style="left:764px;top:532px;color:#b7b7b7"><i style="left:0px">C</i><i style="left:7px">l</i><i style="left:14px">o</i><i style="left:21px">u</i><i style="left:28px">d</i><i style="left:35px">y</i></div>
<div class="t" style="left:764px;top:547px;color:#005fff"><i style="left:0px">-</i><i style="left:7px">1</i><i style="left:14px">4</i></div>
<div class="t" style="left:792px;top:547px;color:#b7b7b7"><i style="left:0px">°</i><i style="left:7px">C</i></div>
<div class="t" style="left:764px;top:562px;color:#ffffff;font-weight:bold"><svg class="g" style="left:0px" width="7" height="15"><path d="M3.6 7.6V11.9" stroke="#ffffff" stroke-width="1.7"/><path d="M1.1 8.4L3.6 4.9L6.1 8.4Z" fill="#ffffff"/></svg></div>
<div class="t" style="left:778px;top:562px;color:#ffd700"><i style="left:0px">1</i><i style="left:7px">8</i></div>
<div class="t" style="left:792px;top:562px;color:#b7b7b7"><i style="left:0px">-</i></div>
<div class="t" style="left:799px;top:562px;color:#ff5f00"><i style="left:0px">3</i><i style="left:7px">0</i></div>
<div class="t" style="left:820px;top:562px;color:#b7b7b7"><i style="left:0px">k</i><i style="left:7px">m</i><i style="left:14px">/</i><i style="left:21px">h</i></div>
<div class="t" style="left:764px;top:577px;color:#b7b7b7"><i style="left:0px">1</i><i style="left:7px">4</i><i style="left:21px">k</i><i style="left:28px">m</i></div>
<div class="t" style="left:764px;top:592px;color:#b7b7b7"><i style="left:0px">0</i><i style="left:7px">.</i><i style="left:14px">0</i><i style="left:28px">m</i><i style="left:35px">m</i><i style="left:49px">|</i><i style="left:63px">0</i><i style="left:70px">%</i></div>
<div class="t" style="left:1px;top:637px;color:#b7b7b7"><i style="left:0px">F</i><i style="left:7px">o</i><i style="left:14px">l</i><i style="left:21px">l</i><i style="left:28px">o</i><i style="left:35px">w</i></div>
<div style="position:absolute;left:50px;top:636px;width:84px;height:15px;background:#1a92aa"></div>
<div class="t" style="left:50px;top:637px;color:#000000"><i style="left:0px">@</i><i style="left:7px">i</i><i style="left:14px">g</i><i style="left:21px">o</i><i style="left:28px">r</i><svg class="g" style="left:35px" width="7" height="15"><rect x="0" y="14" width="7" height="1" fill="#000000" fill-opacity="0.8"/></svg><i style="left:42px">c</i><i style="left:49px">h</i><i style="left:56px">u</i><i style="left:63px">b</i><i style="left:70px">i</i><i style="left:77px">n</i></div>
<div class="t" style="left:141px;top:637px;color:#b7b7b7"><i style="left:0px">f</i><i style="left:7px">o</i><i style="left:14px">r</i><i style="left:28px">w</i><i style="left:35px">t</i><i style="left:42px">t</i><i style="left:49px">r</i><i style="left:56px">.</i><i style="left:63px">i</i><i style="left:70px">n</i><i style="left:84px">u</i><i style="left:91px">p</i><i style="left:98px">d</i><i style="left:105px">a</i><i style="left:112px">t</i><i style="left:119px">e</i><i style="left:126px">s</i></div>
<div class="t" style="left:1px;top:652px;color:#4ce64c;font-weight:bold"><i style="left:0px">t</i><i style="left:7px">e</i><i style="left:14px">s</i><i style="left:21px">t</i><i style="left:28px">@</i><i style="left:35px">t</i><i style="left:42px">e</i><i style="left:49px">s</i><i style="left:56px">t</i><i style="left:63px">-</i><i style="left:70px">V</i><i style="left:77px">i</i><i style="left:84px">r</i><i style="left:91px">t</i><i style="left:98px">u</i><i style="left:105px">a</i><i style="left:112px">l</i><i style="left:119px">B</i><i style="left:126px">o</i><i style="left:133px">x</i></div>
<div class="t" style="left:141px;top:652px;color:#b7b7b7"><i style="left:0px">:</i></div>
<div class="t" style="left:148px;top:652px;color:#295fcc;font-weight:bold"><i style="left:0px">~</i></div>
<div class="t" style="left:155px;top:652px;color:#b7b7b7"><i style="left:0px">$</i></div>
<div id="cur"></div>
</div></body></html>
